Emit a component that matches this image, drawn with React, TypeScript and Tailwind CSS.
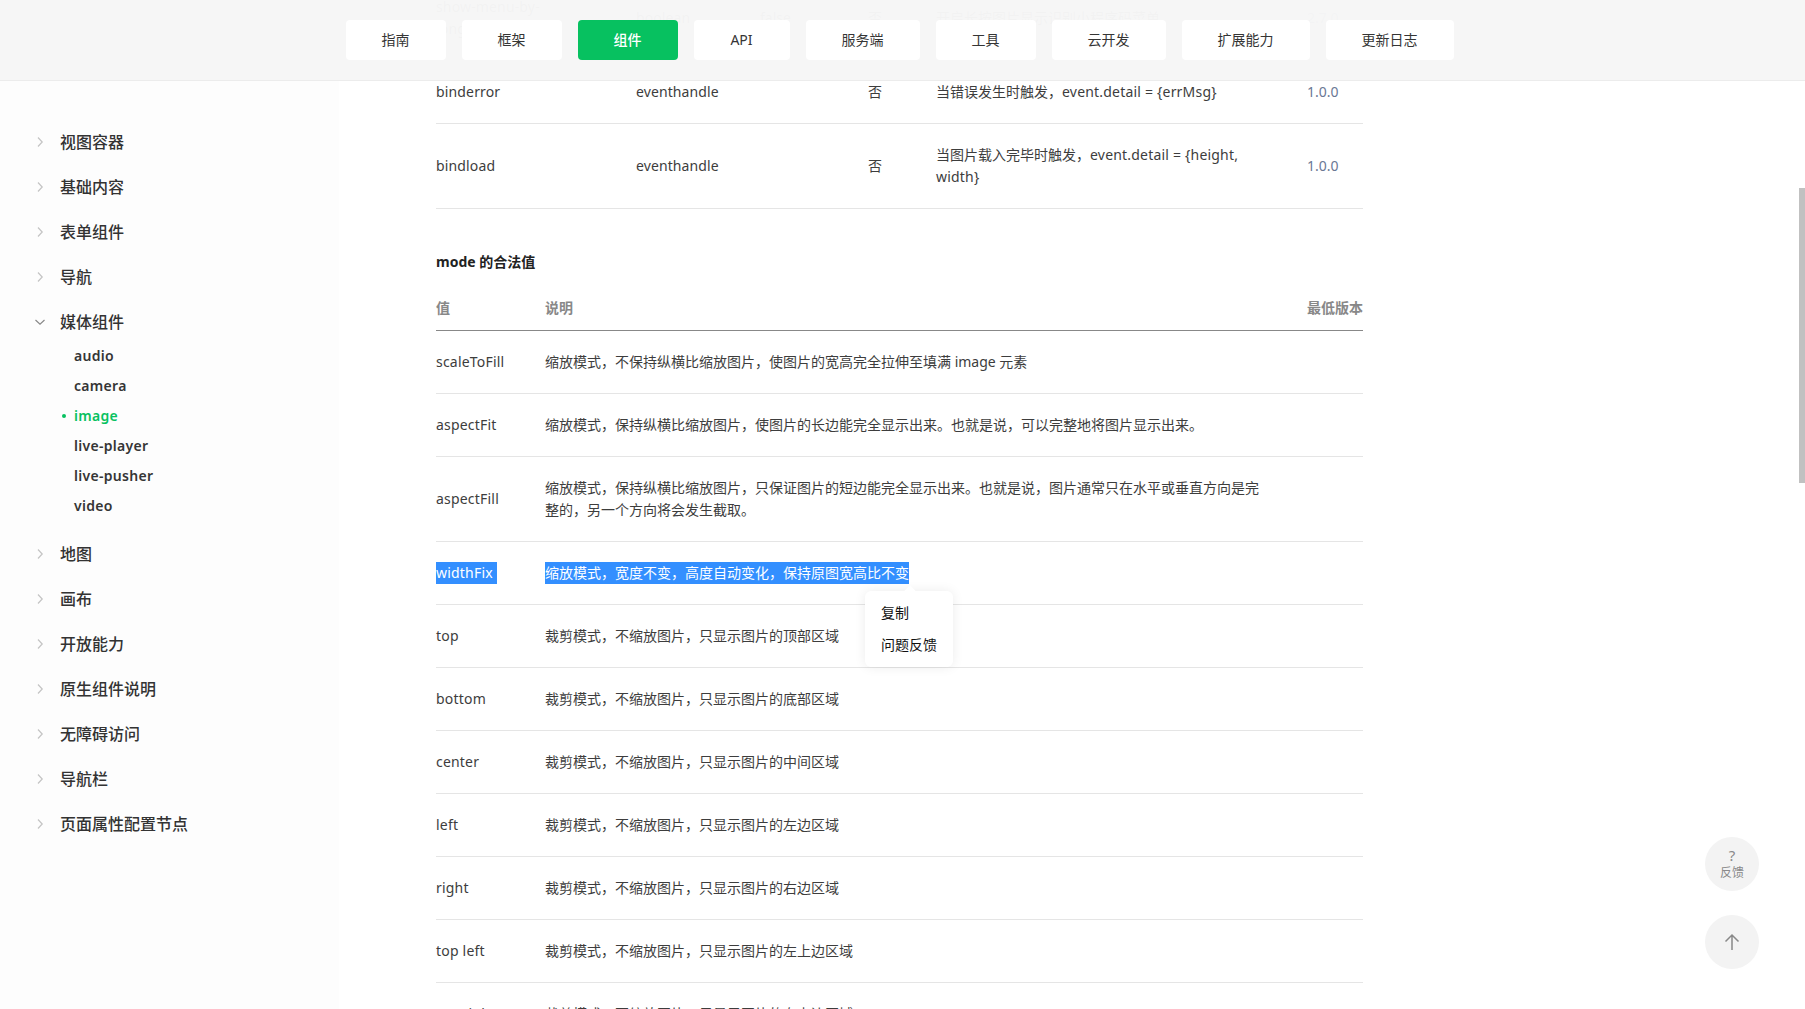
import React from "react";

const navItems = [
  { t: "指南" }, { t: "框架" }, { t: "组件", active: true }, { t: "API" }, { t: "服务端" },
  { t: "工具" }, { t: "云开发" }, { t: "扩展能力" }, { t: "更新日志" },
];

const before = ["视图容器", "基础内容", "表单组件", "导航"];
const after = ["地图", "画布", "开放能力", "原生组件说明", "无障碍访问", "导航栏", "页面属性配置节点"];
const subs = ["audio", "camera", "image", "live-player", "live-pusher", "video"];

function Chevron({ open }: { open?: boolean }) {
  return (
    <svg width="12" height="12" viewBox="0 0 12 12" fill="none" className="shrink-0">
      {open ? (
        <path d="M1.5 4 L6 8.2 L10.5 4" stroke="#888888" strokeWidth="1.2" />
      ) : (
        <path d="M4 1.5 L8.2 6 L4 10.5" stroke="#c4c4c4" strokeWidth="1.2" />
      )}
    </svg>
  );
}

function Group({ label, open }: { label: string; open?: boolean }) {
  return (
    <div className="flex h-[45px] items-center pl-[34px] text-[16px] font-medium text-[#333333]">
      <Chevron open={open} />
      <span className="ml-[14px]">{label}</span>
    </div>
  );
}

function Sidebar() {
  return (
    <aside className="h-full w-[339px] shrink-0 bg-[#fdfdfd] pt-[119px]">
      {before.map((l) => <Group key={l} label={l} />)}
      <Group label="媒体组件" open />
      <div className="-mt-[3px] mb-[10px]">
        {subs.map((s) => (
          <div
            key={s}
            className={`relative flex h-[30px] items-center pl-[74px] text-[14px] font-semibold tracking-[0.3px] ${s === "image" ? "text-[#07c160]" : "text-[#353535]"}`}
          >
            {s === "image" && <span className="absolute left-[62px] h-[4px] w-[4px] rounded-full bg-[#07c160]" />}
            {s}
          </div>
        ))}
      </div>
      {after.map((l) => <Group key={l} label={l} />)}
    </aside>
  );
}

const L = ({ children }: { children: React.ReactNode }) => (
  <span className="tracking-[0.2px]">{children}</span>
);

const topRows = [
  { n: "show-menu-by-longpress", ty: "boolean", d: "false", r: "否", x: <>开启长按图片显示识别小程序码菜单</>, v: "2.7.0", h: "h-[85px]" },
  { n: "binderror", ty: "eventhandle", d: "", r: "否", x: <>当错误发生时触发，<L>event.detail = {"{errMsg}"}</L></>, v: "1.0.0", h: "h-[63px]" },
  { n: "bindload", ty: "eventhandle", d: "", r: "否", x: <>当图片载入完毕时触发，<L>event.detail = {"{height, width}"}</L></>, v: "1.0.0", h: "h-[85px]" },
];

const modeRows: [string, string][] = [
  ["scaleToFill", "缩放模式，不保持纵横比缩放图片，使图片的宽高完全拉伸至填满 image 元素"],
  ["aspectFit", "缩放模式，保持纵横比缩放图片，使图片的长边能完全显示出来。也就是说，可以完整地将图片显示出来。"],
  ["aspectFill", "缩放模式，保持纵横比缩放图片，只保证图片的短边能完全显示出来。也就是说，图片通常只在水平或垂直方向是完整的，另一个方向将会发生截取。"],
  ["widthFix", "缩放模式，宽度不变，高度自动变化，保持原图宽高比不变"],
  ["top", "裁剪模式，不缩放图片，只显示图片的顶部区域"],
  ["bottom", "裁剪模式，不缩放图片，只显示图片的底部区域"],
  ["center", "裁剪模式，不缩放图片，只显示图片的中间区域"],
  ["left", "裁剪模式，不缩放图片，只显示图片的左边区域"],
  ["right", "裁剪模式，不缩放图片，只显示图片的右边区域"],
  ["top left", "裁剪模式，不缩放图片，只显示图片的左上边区域"],
  ["top right", "裁剪模式，不缩放图片，只显示图片的右上边区域"],
];

function TopTable() {
  return (
    <div className="w-[927px]">
      {topRows.map((r) => (
        <div key={r.n} className={`flex ${r.h} items-center border-b border-[#e5e5e5]`}>
          <div className="w-[200px] shrink-0 pr-[60px] tracking-[0.15px]">{r.n}</div>
          <div className="w-[124px] shrink-0 tracking-[0.1px]">{r.ty}</div>
          <div className="w-[108px] shrink-0">{r.d}</div>
          <div className="w-[68px] shrink-0">{r.r}</div>
          <div className="w-[371px] shrink-0 pr-[40px]">{r.x}</div>
          <div className="w-[56px] shrink-0 text-[#6a7894]">{r.v}</div>
        </div>
      ))}
    </div>
  );
}

function ModeTable() {
  return (
    <div className="w-[927px]">
      <div className="flex h-[44px] items-start border-b border-[#888888] pt-[10px] font-bold text-[#888888]">
        <div className="w-[109px] shrink-0">值</div>
        <div className="flex-1">说明</div>
        <div>最低版本</div>
      </div>
      {modeRows.map(([n, d]) => {
        const sel = n === "widthFix";
        return (
          <div
            key={n}
            className={`flex items-center border-b border-[#e5e5e5] ${n === "aspectFill" ? "h-[85px]" : "h-[63px]"}`}
          >
            <div className="w-[109px] shrink-0 tracking-[0.2px]">
              <span className={sel ? "inline-block bg-[#338fff] pr-[4px] text-white" : ""}>{n}</span>
            </div>
            <div className="w-[762px] shrink-0 pr-[40px]">
              <span className={sel ? "inline-block bg-[#338fff] text-white" : ""}>{d}</span>
            </div>
          </div>
        );
      })}
    </div>
  );
}

function Popup() {
  return (
    <div className="absolute left-[865px] top-[591px] z-10 flex h-[76px] w-[88px] flex-col justify-center gap-[10px] rounded-[6px] bg-white pl-[16px] text-[14px] leading-[22px] text-[#111111] shadow-[0_0_12px_rgba(0,0,0,0.08)]">
      <span className="absolute -top-[4px] left-[41px] h-[8px] w-[8px] rotate-45 bg-white" />
      <div>复制</div>
      <div>问题反馈</div>
    </div>
  );
}

export default function App() {
  return (
    <div className="relative flex h-[1009px] w-[1805px] overflow-hidden bg-white text-[14px] leading-[22px] text-[#3d3d3d] [font-family:'Noto_Sans','Noto_Sans_CJK_SC',sans-serif]">
      <Sidebar />
      <main className="-mt-[24px] pl-[97px]">
        <TopTable />
        <h3 className="mt-[42px] mb-[14px] font-bold leading-[22px] text-[#222222]">mode 的合法值</h3>
        <ModeTable />
      </main>

      <header className="absolute inset-x-0 top-0 z-20 flex h-[81px] items-start justify-center gap-[16px] border-b border-[#ececec] bg-[#f6f6f6]/[0.98] pr-[6px] pt-[20px]">
        {navItems.map((n) => (
          <div
            key={n.t}
            className={`flex h-[40px] items-center justify-center rounded-[4px] text-[14px] ${n.t === "API" ? "w-[96px]" : "px-[36px]"} ${n.active ? "bg-[#07c160] font-medium text-white" : "bg-white text-[#353535]"}`}
          >
            {n.t}
          </div>
        ))}
      </header>

      <Popup />

      <div className="absolute right-[46px] top-[837px] z-10 flex h-[54px] w-[54px] flex-col items-center justify-center gap-[2px] rounded-full bg-[#f3f3f3] text-[12px] leading-[16px] text-[#8a8a8a]">
        <span className="text-[15px] leading-[16px]">?</span>
        <span>反馈</span>
      </div>
      <div className="absolute right-[46px] top-[915px] z-10 flex h-[54px] w-[54px] items-center justify-center rounded-full bg-[#f3f3f3]">
        <svg width="16" height="18" viewBox="0 0 16 18" fill="none" stroke="#888888" strokeWidth="1.5">
          <path d="M8 17 V2 M1.5 8.5 L8 2 L14.5 8.5" />
        </svg>
      </div>

      <div className="absolute right-0 top-[188px] z-30 h-[295px] w-[6px] bg-[#c1c1c1]" />
    </div>
  );
}
